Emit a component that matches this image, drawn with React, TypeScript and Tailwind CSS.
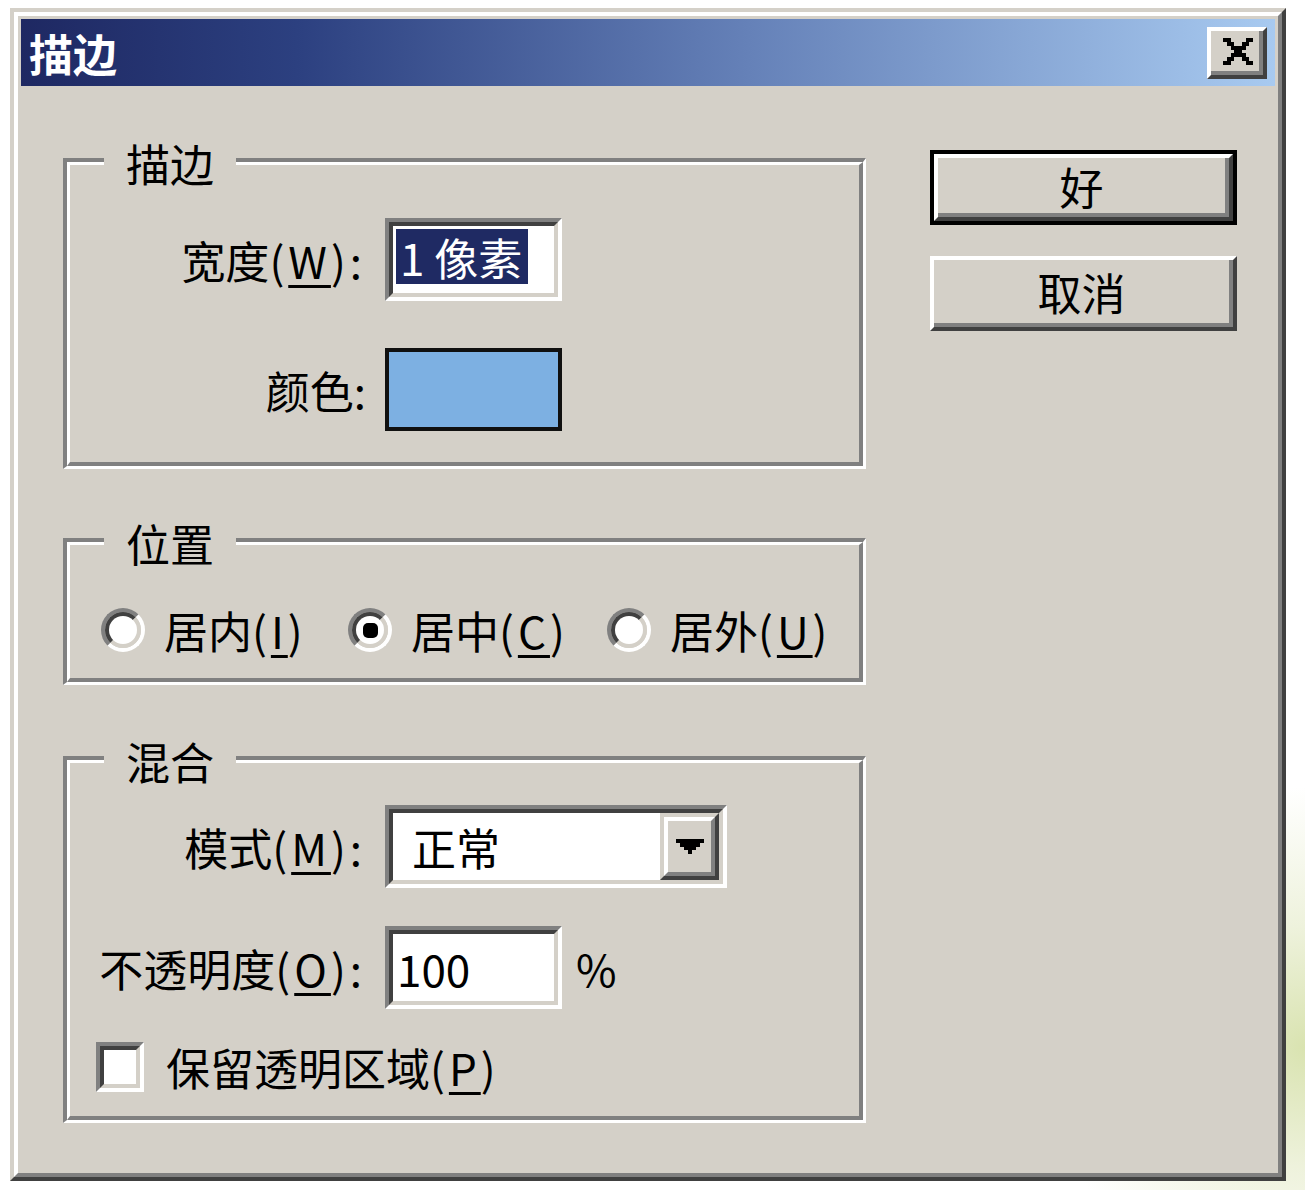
import type { ReactNode } from 'react'

function Acc({ children }: { children: ReactNode }) {
  return <span className="underline decoration-[3px] underline-offset-[6px]">{children}</span>
}

// half-width runs sit a little wider in the old bitmap font
function Half({ children }: { children: ReactNode }) {
  return <span className="tracking-[4px]">{children}</span>
}

function Label({ children }: { children: ReactNode }) {
  return <div className="w-[296px] shrink-0 text-right text-[44px] leading-[44px]">{children}</div>
}

function Sunken({ className, children }: { className: string; children?: ReactNode }) {
  return (
    <div className={`border-4 border-t-[#808080] border-l-[#808080] border-b-white border-r-white ${className}`}>
      <div className="h-full border-4 border-t-[#404040] border-l-[#404040] border-b-[#d4d0c8] border-r-[#d4d0c8] bg-white">
        {children}
      </div>
    </div>
  )
}

function GroupBox({ title, className, children }: { title: string; className: string; children: ReactNode }) {
  return (
    <div className={`relative border-t-4 border-l-4 border-b-[3px] border-r-[3px] border-t-[#808080] border-l-[#808080] border-b-white border-r-white ${className}`}>
      <div className="border-t-[3px] border-l-[3px] border-b-4 border-r-4 border-t-white border-l-white border-b-[#808080] border-r-[#808080]">
        {children}
      </div>
      <div className="absolute left-[37px] top-[-21px] bg-[#d4d0c8] px-[22px] text-[44px] leading-[44px]">{title}</div>
    </div>
  )
}

function Radio({ checked, className, children }: { checked?: boolean; className: string; children: ReactNode }) {
  return (
    <div className={`flex shrink-0 items-center ${className}`}>
      <div className="h-[44px] w-[44px] rounded-full border-4 border-t-[#808080] border-l-[#808080] border-b-white border-r-white">
        <div className="flex h-full w-full items-center justify-center rounded-full border-4 border-t-[#404040] border-l-[#404040] border-b-[#d4d0c8] border-r-[#d4d0c8] bg-white">
          {checked && <div className="h-[15px] w-[15px] rounded-[5px] bg-black" />}
        </div>
      </div>
      <span className="ml-[19px] text-[44px] leading-[44px]">{children}</span>
    </div>
  )
}

function PixelIcon({ rows, cols, pixels, className }: { rows: number; cols: number; pixels: [number, number][]; className: string }) {
  return (
    <svg viewBox={`0 0 ${cols} ${rows}`} preserveAspectRatio="none" shapeRendering="crispEdges" className={className}>
      {pixels.map(([x, y]) => (
        <rect key={`${x}-${y}`} x={x} y={y} width={1} height={1} fill="#000" />
      ))}
    </svg>
  )
}

const closePixels: [number, number][] = [
  [0, 0], [1, 0], [6, 0], [7, 0],
  [1, 1], [2, 1], [5, 1], [6, 1],
  [2, 2], [3, 2], [4, 2], [5, 2],
  [3, 3], [4, 3],
  [2, 4], [3, 4], [4, 4], [5, 4],
  [1, 5], [2, 5], [5, 5], [6, 5],
  [0, 6], [1, 6], [6, 6], [7, 6],
]

const arrowPixels: [number, number][] = [
  [0, 0], [1, 0], [2, 0], [3, 0], [4, 0], [5, 0], [6, 0],
  [1, 1], [2, 1], [3, 1], [4, 1], [5, 1],
  [2, 2], [3, 2], [4, 2],
  [3, 3],
]

export default function App() {
  return (
    <div className="h-[1190px] w-[1305px] overflow-hidden bg-[radial-gradient(circle_at_100%_88%,#d9e3b0_0px,#eef2dc_120px,#ffffff_260px)] pl-[10px] pt-[8px] font-['Noto_Sans_CJK_SC',sans-serif] text-black">
      {/* window frame */}
      <div className="h-[1173px] w-[1276px] border-4 border-t-[#d4d0c8] border-l-[#d4d0c8] border-b-[#404040] border-r-[#404040]">
        <div className="h-full border-4 border-t-white border-l-white border-b-[#808080] border-r-[#808080] bg-[#d4d0c8] p-[3px]">
          {/* title bar */}
          <div className="flex h-[67px] items-center justify-between bg-[linear-gradient(to_right,#1e2862,#2c4080_22%,#6581b8_58%,#a8caf0)] px-[8px]">
            <span className="text-[44px] font-bold leading-[44px] text-white">描边</span>
            <div className="h-[52px] w-[60px] border-4 border-t-white border-l-white border-b-[#404040] border-r-[#404040] bg-[#d4d0c8]">
              <div className="flex h-full items-center justify-center border-b-4 border-r-4 border-b-[#808080] border-r-[#808080] pl-[6px] pt-[2px]">
                <PixelIcon rows={7} cols={8} pixels={closePixels} className="h-[27px] w-[30px]" />
              </div>
            </div>
          </div>

          {/* body */}
          <div className="flex items-start pl-[42px] pt-[64px]">
            <div className="mt-[8px] w-[803px]">
              <GroupBox title="描边" className="">
                <div className="pb-[31px] pt-[53px]">
                  <div className="flex items-center">
                    <Label>宽度<Half>(<Acc>W</Acc>):</Half></Label>
                    <Sunken className="ml-[19px] h-[83px] w-[177px]">
                      <div className="pl-[3px] pt-[3px]">
                        <span className="inline-flex h-[55px] items-center bg-[#1f2a63] pl-[4px] pr-[6px] text-[44px] leading-[44px] text-white">1 像素</span>
                      </div>
                    </Sunken>
                  </div>
                  <div className="mt-[47px] flex items-center">
                    <Label>颜色:</Label>
                    <div className="ml-[19px] h-[83px] w-[177px] border-4 border-[#101010] bg-[#7db0e2]" />
                  </div>
                </div>
              </GroupBox>

              <GroupBox title="位置" className="mt-[69px]">
                <div className="flex items-center pb-[26px] pl-[31px] pt-[63px]">
                  <Radio className="w-[247px]">居内<Half>(<Acc>I</Acc>)</Half></Radio>
                  <Radio checked className="w-[259px]">居中<Half>(<Acc>C</Acc>)</Half></Radio>
                  <Radio className="">居外<Half>(<Acc>U</Acc>)</Half></Radio>
                </div>
              </GroupBox>

              <GroupBox title="混合" className="mt-[71px]">
                <div className="pb-[24px] pt-[42px]">
                  <div className="flex items-center">
                    <Label>模式<Half>(<Acc>M</Acc>):</Half></Label>
                    <Sunken className="ml-[19px] h-[83px] w-[342px]">
                      <div className="flex h-full items-center">
                        <span className="flex-1 pl-[19px] text-[44px] leading-[44px]">正常</span>
                        <div className="h-full w-[59px] border-4 border-t-[#d4d0c8] border-l-[#d4d0c8] border-b-[#404040] border-r-[#404040] bg-[#d4d0c8]">
                          <div className="flex h-full items-center justify-center border-4 border-t-white border-l-white border-b-[#808080] border-r-[#808080]">
                            <PixelIcon rows={4} cols={7} pixels={arrowPixels} className="h-[15px] w-[28px]" />
                          </div>
                        </div>
                      </div>
                    </Sunken>
                  </div>
                  <div className="mt-[38px] flex items-center">
                    <Label>不透明度<Half>(<Acc>O</Acc>):</Half></Label>
                    <Sunken className="ml-[19px] h-[83px] w-[177px]">
                      <div className="flex h-full items-center pl-[4px] text-[44px] leading-[44px]">100</div>
                    </Sunken>
                    <span className="ml-[14px] text-[44px] leading-[44px]">%</span>
                  </div>
                  <div className="mt-[33px] flex items-center pl-[26px]">
                    <Sunken className="h-[50px] w-[48px]" />
                    <span className="ml-[22px] text-[44px] leading-[44px]">保留透明区域<Half>(<Acc>P</Acc>)</Half></span>
                  </div>
                </div>
              </GroupBox>
            </div>

            <div className="ml-[64px] w-[307px]">
              <button className="block h-[75px] w-full border-4 border-black bg-[#d4d0c8]">
                <div className="h-full border-4 border-t-white border-l-white border-b-[#404040] border-r-[#404040]">
                  <div className="flex h-full items-center justify-center border-b-4 border-r-4 border-b-[#808080] border-r-[#808080] text-[44px] leading-[44px]">
                    好
                  </div>
                </div>
              </button>
              <button className="mt-[31px] block h-[75px] w-full border-4 border-t-white border-l-white border-b-[#404040] border-r-[#404040] bg-[#d4d0c8]">
                <div className="flex h-full items-center justify-center border-b-4 border-r-4 border-b-[#808080] border-r-[#808080] text-[44px] leading-[44px]">
                  取消
                </div>
              </button>
            </div>
          </div>
        </div>
      </div>
    </div>
  )
}
